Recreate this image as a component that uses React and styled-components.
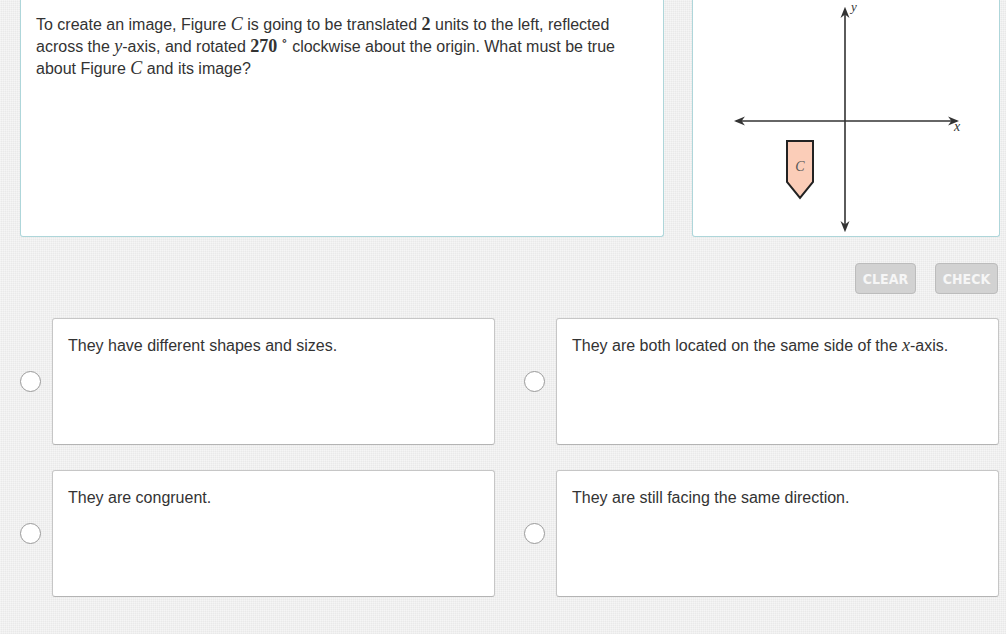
import styled, { createGlobalStyle } from 'styled-components'

const GlobalStyle = createGlobalStyle`
  body {
    margin: 0;
    background-color: #e9e9e9;
    background-image:
      linear-gradient(90deg, rgba(255,255,255,0.3) 50%, transparent 50%),
      linear-gradient(rgba(255,255,255,0.3) 50%, transparent 50%);
    background-size: 2px 2px;
    font-family: "Liberation Sans", Arial, sans-serif;
    color: #333;
  }
`

const Page = styled.div`
  width: 1006px;
  height: 634px;
  padding: 0 6px 0 20px;
  box-sizing: border-box;
  overflow: hidden;
`

const TopRow = styled.div`
  display: flex;
  gap: 28px;
  align-items: flex-start;
`

const Panel = styled.div`
  background: #fff;
  border: 1px solid #aed6da;
  border-top: none;
  border-radius: 0 0 3px 3px;
  box-sizing: border-box;
  height: 237px;
  width: ${p => p.$w}px;
  flex-shrink: 0;
`

const Question = styled(Panel)`
  padding: 14px 15px;
  font-size: 16px;
  line-height: 22px;
`

const M = styled.span`
  font-family: "Liberation Serif", "DejaVu Serif", serif;
  font-style: ${p => (p.$up ? 'normal' : 'italic')};
  font-size: 18px;
  line-height: 1;
  font-weight: ${p => (p.$up ? 600 : 400)};
`

const Deg = styled.span`
  position: relative;
  top: -7px;
  font-size: 13px;
  line-height: 0;
  font-weight: 400;
  margin-left: 4px;
`

const Toolbar = styled.div`
  display: flex;
  justify-content: flex-end;
  gap: 19px;
  margin-top: 26px;
  padding-right: 2px;
`

const Btn = styled.button`
  height: 31px;
  width: ${p => p.$w}px;
  border: 1px solid #bcbcbc;
  border-radius: 4px;
  background: #d2d2d2;
  color: #f6f6f6;
  font-family: "DejaVu Sans Condensed", "Liberation Sans Narrow", sans-serif;
  font-weight: 600;
  font-size: 14px;
  padding: 0;
`

const Grid = styled.div`
  display: grid;
  grid-template-columns: 475px 475px;
  column-gap: 29px;
  row-gap: 25px;
  margin-top: 24px;
`

const Option = styled.label`
  display: flex;
  align-items: center;
  gap: 11px;
`

const Radio = styled.span`
  width: 21px;
  height: 21px;
  border-radius: 50%;
  border: 1px solid #9a9a9a;
  background: #fff;
  box-sizing: border-box;
  flex-shrink: 0;
`

const Card = styled.div`
  flex: 1;
  height: 127px;
  box-sizing: border-box;
  background: #fff;
  border: 1px solid #c6c6c6;
  border-bottom-color: #b4b4b4;
  border-radius: 3px;
  padding: 16px 15px;
  font-size: 16px;
  line-height: 22px;
`

function Figure() {
  return (
    <svg width="306" height="236" viewBox="0 0 306 236">
      <defs>
        <marker id="ar" viewBox="0 0 10 10" refX="8" refY="5" markerWidth="7" markerHeight="7" orient="auto-start-reverse">
          <path d="M0 1 L10 5 L0 9 L3 5 Z" fill="#333" />
        </marker>
      </defs>
      <line x1="43" y1="121" x2="264" y2="121" stroke="#333" strokeWidth="1.6" markerStart="url(#ar)" markerEnd="url(#ar)" />
      <line x1="152" y1="9" x2="152" y2="230" stroke="#333" strokeWidth="1.6" markerStart="url(#ar)" markerEnd="url(#ar)" />
      <text x="158" y="11" fontFamily="Liberation Serif, serif" fontStyle="italic" fontSize="13" fill="#333">y</text>
      <text x="261" y="131" fontFamily="Liberation Serif, serif" fontStyle="italic" fontSize="14" fill="#333">x</text>
      <path d="M94 141 L120 141 L120 182 L107 198 L94 182 Z" fill="#fbcdb8" stroke="#222" strokeWidth="2" />
      <text x="107" y="171" textAnchor="middle" fontFamily="Liberation Serif, serif" fontStyle="italic" fontSize="14" fill="#555">C</text>
    </svg>
  )
}

const answers = [
  'They have different shapes and sizes.',
  <>They are both located on the same side of the <M>x</M>-axis.</>,
  'They are congruent.',
  'They are still facing the same direction.',
]

export default function App() {
  return (
    <Page>
      <GlobalStyle />
      <TopRow>
        <Question $w={644}>
          To create an image, Figure <M>C</M> is going to be translated <M $up>2</M> units to the left, reflected
          across the <M>y</M>-axis, and rotated <M $up>270<Deg>∘</Deg></M> clockwise about the origin. What must be true
          about Figure <M>C</M> and its image?
        </Question>
        <Panel $w={308}>
          <Figure />
        </Panel>
      </TopRow>
      <Toolbar>
        <Btn $w={61}>CLEAR</Btn>
        <Btn $w={63}>CHECK</Btn>
      </Toolbar>
      <Grid>
        {answers.map((a, i) => (
          <Option key={i}>
            <Radio />
            <Card>{a}</Card>
          </Option>
        ))}
      </Grid>
    </Page>
  )
}
